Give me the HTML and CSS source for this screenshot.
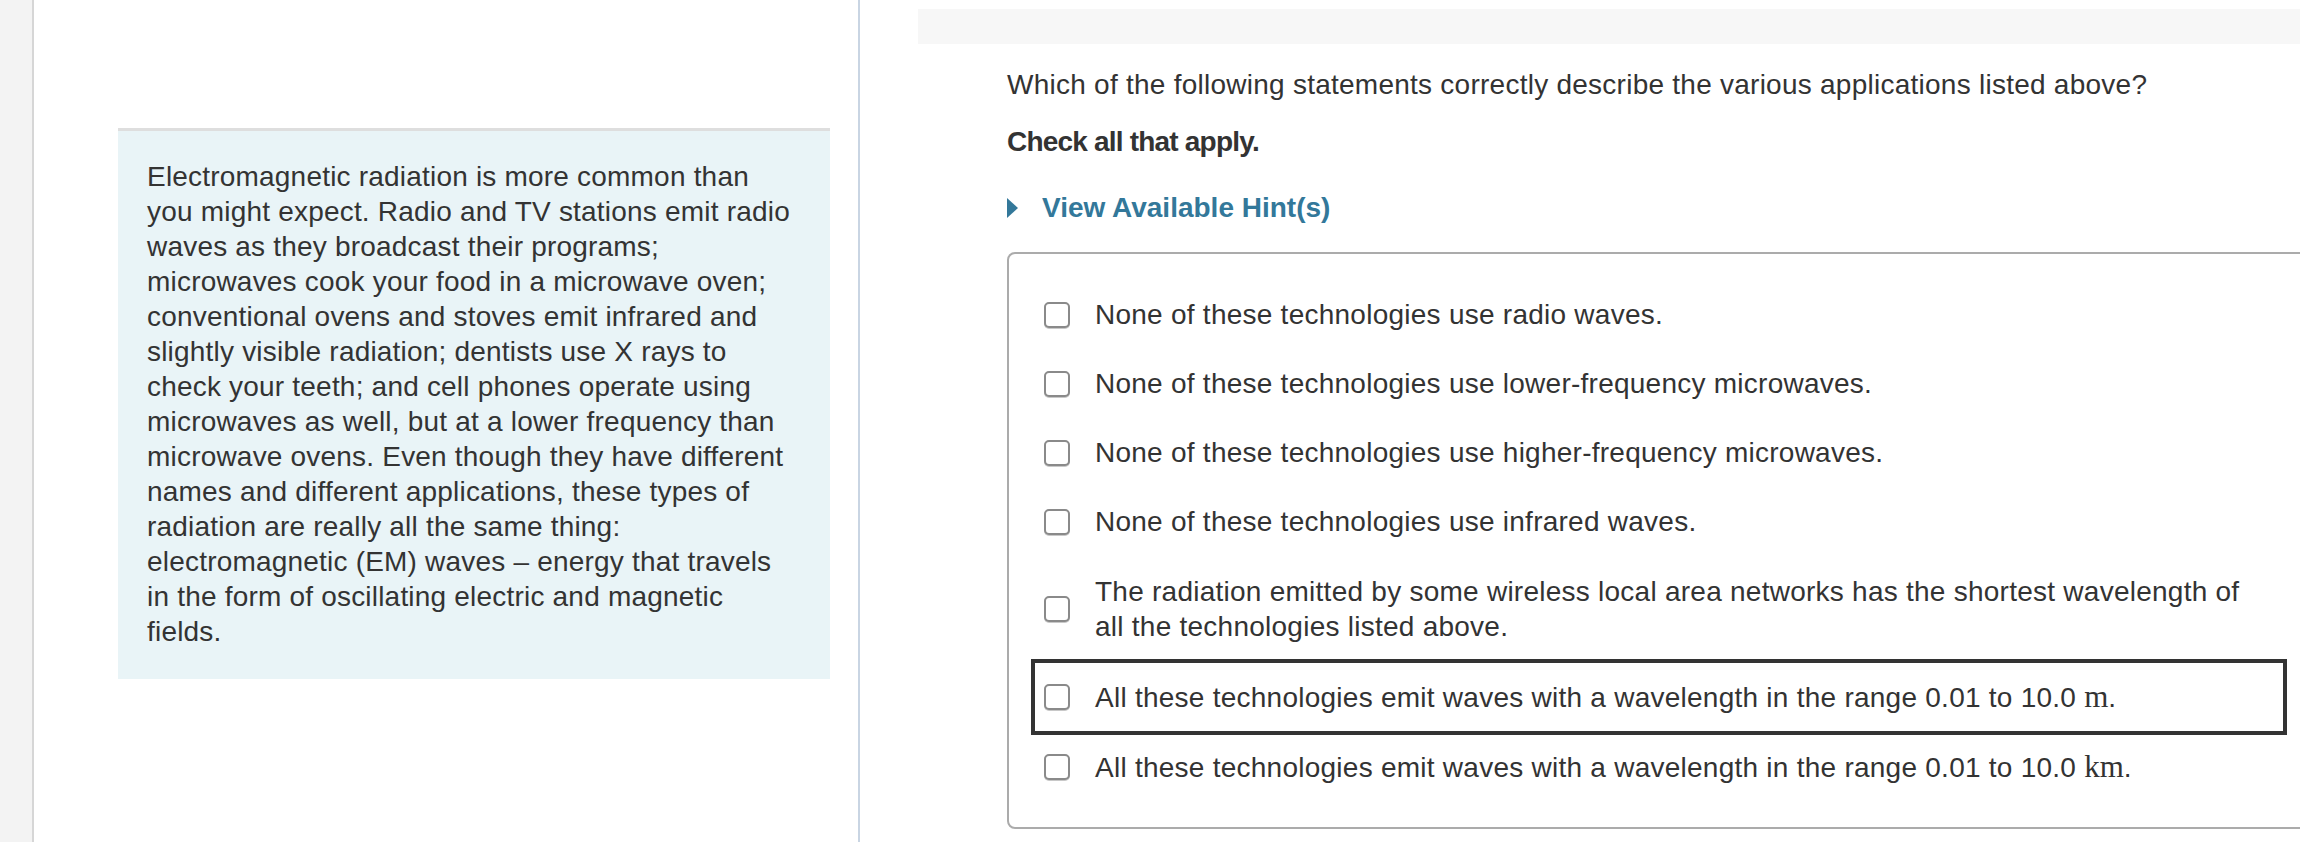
FILE: index.html
```html
<!DOCTYPE html>
<html>
<head>
<meta charset="utf-8">
<link rel="stylesheet" href="styles.css">
</head>
<body>
<div class="page">
  <div class="rail"></div>
  <div class="left">
    <div class="passage">Electromagnetic radiation is more common than you might expect. Radio and TV stations emit radio waves as they broadcast their programs; microwaves cook your food in a microwave oven; conventional ovens and stoves emit infrared and slightly visible radiation; dentists use X rays to check your teeth; and cell phones operate using microwaves as well, but at a lower frequency than microwave ovens. Even though they have different names and different applications, these types of radiation are really all the same thing: electromagnetic (EM) waves – energy that travels in the form of oscillating electric and magnetic fields.</div>
  </div>
  <div class="right">
    <div class="band"></div>
    <div class="content">
      <p class="question">Which of the following statements correctly describe the various applications listed above?</p>
      <p class="instr">Check all that apply.</p>
      <div class="hint"><span class="tri"></span><span>View Available Hint(s)</span></div>
      <div class="choices">
        <label class="row"><span class="box"></span><span class="txt">None of these technologies use radio waves.</span></label>
        <label class="row"><span class="box"></span><span class="txt">None of these technologies use lower-frequency microwaves.</span></label>
        <label class="row"><span class="box"></span><span class="txt">None of these technologies use higher-frequency microwaves.</span></label>
        <label class="row"><span class="box"></span><span class="txt">None of these technologies use infrared waves.</span></label>
        <label class="row two"><span class="box"></span><span class="txt">The radiation emitted by some wireless local area networks has the shortest wavelength of all the technologies listed above.</span></label>
        <label class="row focus"><span class="box"></span><span class="txt">All these technologies emit waves with a wavelength in the range 0.01 to 10.0 <span class="math">m</span>.</span></label>
        <label class="row"><span class="box"></span><span class="txt">All these technologies emit waves with a wavelength in the range 0.01 to 10.0 <span class="math">km</span>.</span></label>
      </div>
    </div>
  </div>
</div>
</body>
</html>
```

FILE: styles.css
```css
html, body {
  margin: 0;
  padding: 0;
  background: #ffffff;
  overflow: hidden;
}
body {
  width: 2300px;
  height: 842px;
  font-family: "Liberation Sans", Arial, Helvetica, sans-serif;
  color: #333333;
  font-size: 28px;
  letter-spacing: 0.25px;
  line-height: 35px;
}
.page {
  display: flex;
  height: 842px;
}
.rail {
  width: 32px;
  flex: 0 0 32px;
  background: #f3f3f3;
  border-right: 2px solid #d6d6d6;
}
.left {
  width: 824px;
  flex: 0 0 824px;
  border-right: 2px solid #c9d5e3;
}
.passage {
  margin: 128px 0 0 84px;
  width: 712px;
  box-sizing: border-box;
  border-top: 3px solid #dedede;
  background: #e9f4f7;
  padding: 28px 29px 30px 29px;
  letter-spacing: 0.2px;
}
.right {
  flex: 1 1 auto;
  min-width: 0;
}
.band {
  margin: 9px 0 0 58px;
  height: 35px;
  background: #f7f7f7;
}
.content {
  padding-left: 147px;
  padding-top: 23px;
}
.question {
  margin: 0;
}
.instr {
  margin: 22px 0 0 0;
  font-weight: bold;
  letter-spacing: -0.8px;
}
.hint {
  margin-top: 31px;
  display: flex;
  align-items: center;
  color: #33789a;
  font-weight: bold;
  letter-spacing: 0;
}
.tri {
  width: 0;
  height: 0;
  border-top: 10px solid transparent;
  border-bottom: 10px solid transparent;
  border-left: 11px solid #33789a;
  margin-right: 24px;
}
.choices {
  margin-top: 27px;
  width: 1304px;
  box-sizing: border-box;
  border: 2px solid #ababab;
  border-radius: 8px;
  padding: 26px 25px 25px 25px;
}
.row {
  display: flex;
  align-items: center;
  padding: 17px 10px;
}
.row.two {
  padding: 18px 10px;
}
.row.focus {
  outline: 4px solid #333333;
  outline-offset: -1px;
}
.box {
  flex: 0 0 26px;
  width: 26px;
  height: 26px;
  box-sizing: border-box;
  border: 2px solid #8a8a8a;
  border-radius: 5px;
  background: #ffffff;
  box-shadow: 0 1px 0 #c8c8c8;
  margin-right: 25px;
}
.txt {
  flex: 1 1 auto;
  padding-right: 25px;
}
.math {
  font-family: "Liberation Serif", "DejaVu Serif", serif;
  font-size: 31px;
  letter-spacing: 0;
}
```
